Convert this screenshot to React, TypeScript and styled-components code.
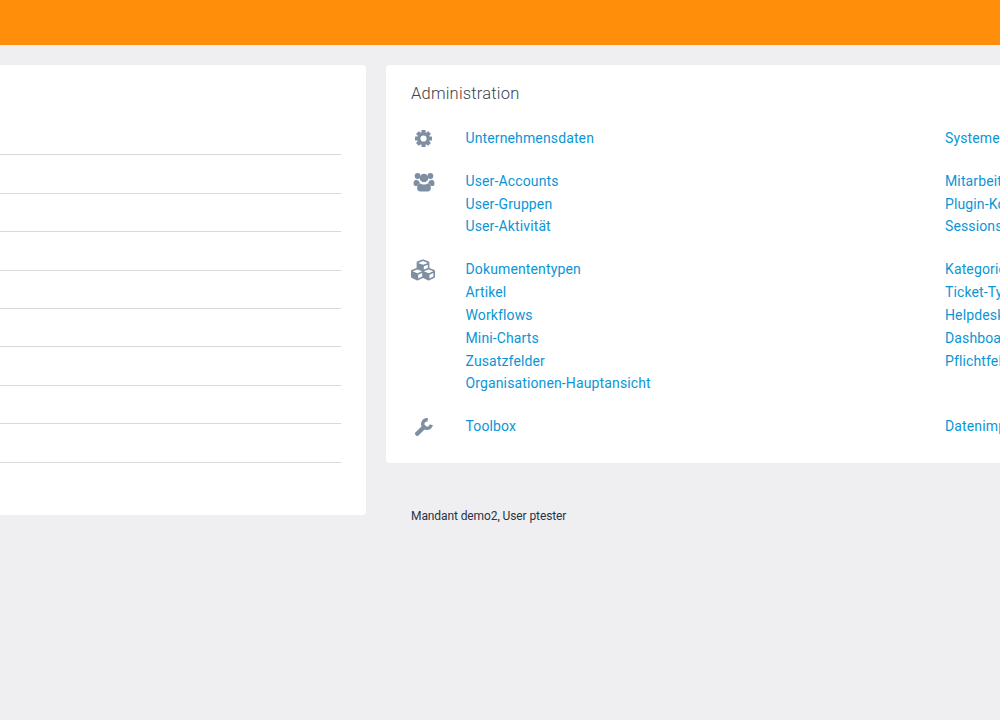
import React from 'react'
import styled, { createGlobalStyle } from 'styled-components'
import { FaCubes } from 'react-icons/fa'

const GlobalStyle = createGlobalStyle`
  html, body {
    margin: 0;
    height: 100%;
    overflow: hidden;
    background: #efeff2;
    font-family: Roboto, "Liberation Sans", sans-serif;
  }
`

const CogIcon = () => (
  <svg width="19" height="19" viewBox="0 0 19 19" fill="currentColor">
    {[0, 45, 90, 135, 180, 225, 270, 315].map((a) => (
      <rect key={a} x="7.4" y="1" width="4.2" height="5" rx="0.6" transform={`rotate(${a} 9.5 9.5)`} />
    ))}
    <circle cx="9.5" cy="9.5" r="4.7" fill="none" stroke="currentColor" strokeWidth="3.2" />
  </svg>
)

const UsersIcon = () => (
  <svg width="22" height="20" viewBox="0 0 22 20" fill="currentColor">
    <circle cx="4.6" cy="4" r="2.9" />
    <circle cx="17.4" cy="4" r="2.9" />
    <circle cx="11" cy="6" r="4.3" />
    <path d="M0.5 11.5c0-2.6 1.3-3.8 3-3.8 0.9 0.7 1.6 1 2.4 1 0.1 0.9 0.5 1.6 1.1 2.2-1.4 0.6-2.4 1.5-2.8 3H2.5c-1.2 0-2-0.8-2-2.4z" />
    <path d="M21.5 11.5c0-2.6-1.3-3.8-3-3.8-0.9 0.7-1.6 1-2.4 1-0.1 0.9-0.5 1.6-1.1 2.2 1.4 0.6 2.4 1.5 2.8 3h2.2c1.2 0 1.5-0.8 1.5-2.4z" />
    <path d="M7 11.2c1.2 0.9 2.5 1.3 4 1.3s2.8-0.4 4-1.3c2.1 0.4 2.9 2 2.9 4.2 0 2.7-1.3 4.1-3.2 4.1H7.3c-1.9 0-3.2-1.4-3.2-4.1 0-2.2 0.8-3.8 2.9-4.2z" />
  </svg>
)

const WrenchIcon = () => (
  <svg width="20" height="20" viewBox="0 0 20 20" fill="none" stroke="currentColor">
    <path d="M13.75 2.8A4.3 4.3 0 1 0 17.24 7.75" strokeWidth="3.4" />
    <path d="M10 10L3.2 16.8" strokeWidth="4.4" strokeLinecap="round" />
  </svg>
)

const CubesIcon = styled(FaCubes)`
  margin: -2px 0 0 -2px;
`

const groups = [
  { icon: <CogIcon />, left: ['Unternehmensdaten'], right: ['Systemeinstellungen'] },
  {
    icon: <UsersIcon />,
    left: ['User-Accounts', 'User-Gruppen', 'User-Aktivität'],
    right: ['Mitarbeiter', 'Plugin-Konfiguration', 'Sessions'],
  },
  {
    icon: <CubesIcon size={24} />,
    left: ['Dokumententypen', 'Artikel', 'Workflows', 'Mini-Charts', 'Zusatzfelder', 'Organisationen-Hauptansicht'],
    right: ['Kategorien', 'Ticket-Typen', 'Helpdesk', 'Dashboards', 'Pflichtfelder'],
  },
  { icon: <WrenchIcon />, left: ['Toolbox'], right: ['Datenimport'] },
]

const App = () => {
  return (
    <>
      <GlobalStyle />
      <TopBar />
      <Main>
        <LeftPanel>
          <PanelHead />
          {Array.from({ length: 9 }).map((_, i) => <ListRow key={i} />)}
        </LeftPanel>
        <RightColumn>
          <AdminPanel>
            <Title>Administration</Title>
            {groups.map((g, i) => (
              <Group key={i}>
                <IconCell>{g.icon}</IconCell>
                <Links>
                  {g.left.map((t) => <LinkText key={t} href="#">{t}</LinkText>)}
                </Links>
                <Links>
                  {g.right.map((t) => <LinkText key={t} href="#">{t}</LinkText>)}
                </Links>
              </Group>
            ))}
          </AdminPanel>
          <Footer>Mandant demo2, User ptester</Footer>
        </RightColumn>
      </Main>
    </>
  )
}

export default App

const TopBar = styled.div`
  height: 45px;
  background: #ff8f0a;
`

const Main = styled.div`
  display: flex;
  gap: 20px;
  align-items: flex-start;
  width: 1400px;
  margin: 20px 0 0 -114px;
`

const LeftPanel = styled.div`
  box-sizing: border-box;
  width: 480px;
  height: 450px;
  padding: 0 25px;
  background: #fff;
  border-radius: 4px;
`

const PanelHead = styled.div`
  height: 52px;
`

const ListRow = styled.div`
  box-sizing: border-box;
  height: 38.4px;
  border-bottom: 1px solid #d9d9d9;
`

const RightColumn = styled.div`
  width: 900px;
`

const AdminPanel = styled.div`
  box-sizing: border-box;
  height: 398px;
  padding: 18px 25px 0;
  background: #fff;
  border-radius: 4px;
`

const Title = styled.h2`
  margin: 0 0 22px;
  font-size: 16.5px;
  line-height: 22px;
  font-weight: 300;
  letter-spacing: 0.2px;
  color: #3a424d;
`

const Group = styled.div`
  display: grid;
  grid-template-columns: 54.5px 479.5px 1fr;
  margin-bottom: 20.08px;
`

const IconCell = styled.div`
  display: flex;
  justify-content: center;
  align-items: flex-start;
  width: 25px;
  height: 22.8px;
  padding-top: 2px;
  box-sizing: border-box;
  color: #7f8fa2;

  svg {
    flex-shrink: 0;
  }
`

const Links = styled.div`
  display: flex;
  flex-direction: column;
`

const LinkText = styled.a`
  font-size: 14px;
  line-height: 22.8px;
  letter-spacing: 0.13px;
  color: #0a96d6;
  text-decoration: none;
  white-space: nowrap;
`

const Footer = styled.div`
  margin: 45px 0 0 25px;
  font-size: 12px;
  line-height: 16px;
  letter-spacing: -0.1px;
  color: #2a3342;
`
